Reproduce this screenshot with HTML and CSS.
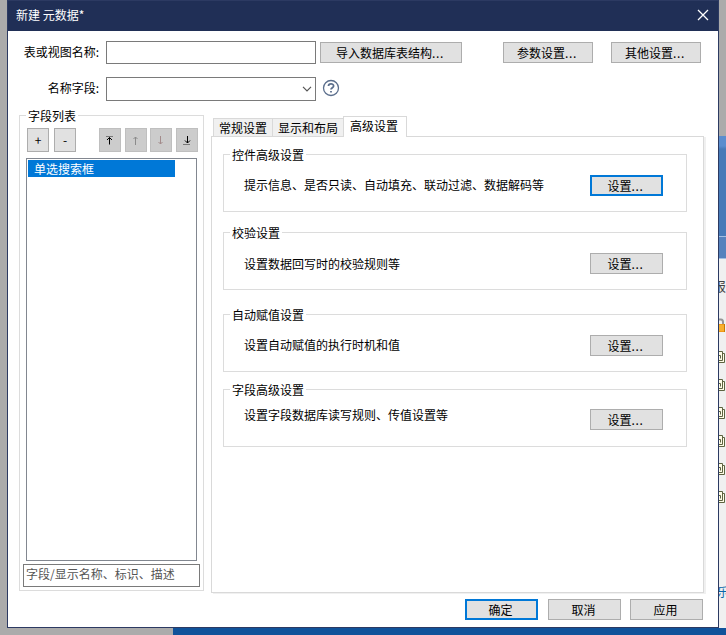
FILE: index.html
```html
<!DOCTYPE html>
<html lang="zh-CN">
<head>
<meta charset="utf-8">
<title>新建 元数据</title>
<link rel="stylesheet" href="styles.css">
</head>
<body>
<div class="desktop">
  <div class="left-edge"></div>
  <main class="dialog">
    <header class="titlebar">
      <span>新建 元数据*</span>
      <svg class="close" width="12" height="12" viewBox="0 0 12 12"><path d="M1 1 11 11M11 1 1 11"/></svg>
    </header>
    <div class="form-row first">
      <label>表或视图名称:</label>
      <div class="field"></div>
      <button class="btn import">导入数据库表结构<span class="dots">...</span></button>
      <button class="btn params">参数设置<span class="dots">...</span></button>
      <button class="btn other">其他设置<span class="dots">...</span></button>
    </div>
    <div class="form-row second">
      <label>名称字段:</label>
      <div class="field combo"><svg width="10" height="6" viewBox="0 0 10 6"><path d="M1 .8 5 4.8 9 .8"/></svg></div>
      <svg class="help" width="18" height="18" viewBox="0 0 18 18"><circle cx="9" cy="9" r="7.5"/><path class="hook" d="M6.5 7C6.5 4.2 11.6 4.2 11.6 6.9 11.6 8.7 9 8.6 9 10.6"/><path class="hook" d="M9 12v1.6"/></svg>
    </div>
    <div class="content">
      <section class="group fields">
        <h2 class="legend">字段列表</h2>
        <div class="tools">
          <button class="tool">+</button>
          <button class="tool minus">-</button>
          <button class="tool dim to-top"><svg width="8" height="9" viewBox="0 0 8 9"><path class="soft" d="M0 .5h7"/><path d="M3.500 8.500v-7M1 4l2.500-2.500L6 4"/></svg></button>
          <button class="tool dim up"><svg class="off" width="8" height="12" viewBox="0 0 8 12"><path d="M3.500 11V3M1.500 5l2-2 2 2"/></svg></button>
          <button class="tool dim down"><svg class="off red" width="8" height="12" viewBox="0 0 8 12"><path d="M3.500 2v8M1.500 8l2 2 2-2"/></svg></button>
          <button class="tool dim to-bottom"><svg width="8" height="9" viewBox="0 0 8 9"><path class="soft" d="M0 8.500h7"/><path d="M4.500 0v7M2 4.500 4.500 7 7 4.500"/></svg></button>
        </div>
        <div class="list"><div class="item">单选搜索框</div></div>
        <div class="filter">字段/显示名称、标识、描述</div>
      </section>
      <section class="tabs">
        <nav class="tabbar">
          <span class="tab one">常规设置</span><span class="tab two">显示和布局</span><span class="tab active">高级设置</span>
        </nav>
        <div class="panel">
          <section class="group setting">
            <h2 class="legend">控件高级设置</h2>
            <div class="line"><p>提示信息、是否只读、自动填充、联动过滤、数据解码等</p><button class="btn small focus">设置<span class="dots">...</span></button></div>
          </section>
          <section class="group setting check">
            <h2 class="legend">校验设置</h2>
            <div class="line"><p>设置数据回写时的校验规则等</p><button class="btn small">设置<span class="dots">...</span></button></div>
          </section>
          <section class="group setting assign">
            <h2 class="legend">自动赋值设置</h2>
            <div class="line"><p>设置自动赋值的执行时机和值</p><button class="btn small">设置<span class="dots">...</span></button></div>
          </section>
          <section class="group setting advanced">
            <h2 class="legend">字段高级设置</h2>
            <div class="line"><p>设置字段数据库读写规则、传值设置等</p><button class="btn small">设置<span class="dots">...</span></button></div>
          </section>
        </div>
      </section>
    </div>
    <footer class="actions">
      <button class="btn small focus">确定</button>
      <button class="btn small">取消</button>
      <button class="btn small">应用</button>
    </footer>
  </main>
  <aside class="right-edge">
    <div class="sky"></div>
    <div class="band"></div>
    <div class="report"><span>报</span></div>
    <svg class="lock" width="7" height="15" viewBox="0 0 7 15"><path d="M0 1.500h2Q4 1.500 4 4V7" fill="none" stroke="#969696" stroke-width="2"/><path d="M0 6h6v8H0z" fill="#f09a16"/><path d="M0 8h5M0 10h5M0 12h5" stroke="#ffc647"/><path d="M5.500 6v8" stroke="#c87508"/></svg>
    <svg class="copies" width="7" height="153" viewBox="0 0 7 153">
      <defs><g id="copy" fill="#fffde8" stroke="#5d6340"><path d="M0 2.500h5.500v9H0"/><path d="M-1 .5h4.500v9H-1"/><path d="M0 4.500h1.500v3" fill="none"/></g></defs>
      <use href="#copy"/><use href="#copy" y="28"/><use href="#copy" y="56"/><use href="#copy" y="84"/><use href="#copy" y="112"/><use href="#copy" y="140"/>
    </svg>
    <div class="link"><span>乐</span></div>
  </aside>
  <div class="bottom-gray"></div>
</div>
</body>
</html>
```

FILE: styles.css
```css
* { box-sizing: border-box; }
body {
  margin: 0;
  font: 12px/14px "Noto Sans CJK SC", sans-serif;
  color: #000;
  overflow: hidden;
}
button, h2, p { margin: 0; font: inherit; color: inherit; }
svg { display: block; fill: none; flex: none; }
.desktop {
  width: 726px;
  height: 635px;
  display: grid;
  grid-template-columns: 7px 712px 7px;
  grid-template-rows: 628px 7px;
  background: #10529a;
}
.left-edge { background: #ababab; }
.bottom-gray { grid-column: 1 / 3; width: 173px; background: #ababab; }
.dialog {
  background: #fff;
  border: 1px solid #2c3a62;
  display: flex;
  flex-direction: column;
}
.titlebar {
  height: 30px;
  background: #202f56;
  color: #fff;
  display: flex;
  align-items: center;
  justify-content: space-between;
  padding: 0 9px 2px 8px;
}
.close { stroke: #fff; stroke-width: 1.3; }
.form-row { display: flex; align-items: center; }
.form-row label { width: 91px; margin-right: 7px; padding-bottom: 2px; text-align: right; white-space: nowrap; }
.first { height: 23px; margin-top: 10px; }
.second { height: 24px; margin-top: 13px; }
.field { width: 210px; height: 100%; border: 1px solid #7a7a7a; }
.combo { display: flex; align-items: center; justify-content: flex-end; padding-right: 3px; }
.combo svg { stroke: #555; stroke-width: 1.2; }
.help { margin: -2px 0 0 6px; stroke: #5b6e8c; stroke-width: 1.3; }
.help .hook { stroke-width: 1.8; }
.btn {
  height: 21px;
  padding: 0 2px 0 0;
  border: 1px solid #adadad;
  background: #e1e1e1;
  display: flex;
  align-items: center;
  justify-content: center;
  white-space: nowrap;
}
.dots { letter-spacing: .7px; }
.import { width: 142px; margin-left: 4px; }
.params { width: 90px; margin-left: 41px; }
.other { width: 90px; margin-left: 18px; }
.small { width: 73px; }
.focus { border: 2px solid #0078d7; }
.content { display: flex; margin-top: 14px; height: 479px; }
.group { border: 1px solid #dcdcdc; }
.legend {
  width: max-content;
  height: 14px;
  background: #fff;
  margin: -7px 0 0 6px;
  padding: 0 2px;
}
.fields { width: 185px; height: 476px; margin-left: 11px; }
.tools { display: flex; margin: 5px 0 0 7px; }
.tool {
  width: 22px;
  height: 24px;
  padding: 0;
  border: 1px solid #adadad;
  background: #e1e1e1;
  display: flex;
  align-items: center;
  justify-content: center;
}
.tool svg { stroke: #000; stroke-width: 1; }
.tool .soft { stroke: #777; }
.tool .off { stroke: #8b8b8b; }
.tool .red { stroke: #a38b8b; }
.dim { background: #ccc; border-color: #bfbfbf; }
.minus { margin-left: 5px; }
.to-top { margin-left: 23px; }
.up { margin-left: 4px; }
.down { margin-left: 3px; }
.to-bottom { margin-left: 4px; }
.list {
  width: 171px;
  height: 403px;
  margin: 6px 0 0 6px;
  padding: 1px;
  border: 1px solid #828790;
}
.item { width: 147px; height: 17px; line-height: 18px; padding-left: 6px; color: #fff; background: #0078d7; }
.filter {
  width: 177px;
  height: 23px;
  margin: 3px 0 0 3px;
  border: 1px solid #7a7a7a;
  line-height: 18px;
  padding-left: 2px;
  color: #555;
}
.tabs { margin-left: 7px; padding-top: 1px; }
.tabbar { display: flex; align-items: flex-end; height: 21px; padding-left: 2px; }
.tab {
  height: 19px;
  border: 1px solid #d9d9d9;
  background: #f0f0f0;
  line-height: 18px;
  padding-left: 5px;
  white-space: nowrap;
}
.one { width: 59px; border-right: 0; }
.two { width: 71px; border-right: 0; }
.active { width: 64px; height: 21px; background: #fff; border-bottom: 0; padding-left: 6px; z-index: 1; }
.panel {
  width: 493px;
  height: 457px;
  margin-top: -1px;
  padding: 17px 0 0 11px;
  border: 1px solid #d9d9d9;
  box-shadow: 2px 1px 0 #f0f0f0;
}
.setting { width: 464px; height: 58px; }
.check { margin-top: 20px; }
.assign { margin-top: 24px; }
.advanced { margin-top: 17px; }
.line { display: flex; justify-content: space-between; align-items: flex-start; padding: 13px 23px 0 20px; }
.line p { margin-top: 3px; }
.check p { margin-top: 4px; }
.advanced .line { padding-top: 12px; }
.advanced p { margin-top: -1px; }
.actions { display: flex; margin: 5px 0 0 457px; }
.actions .btn + .btn { margin-left: 10px; }
.actions .btn:last-child { margin-left: 9px; }
.right-edge { background: #f0f0f0; border-top: 136px solid #ababab; overflow: hidden; height: 628px; }
.sky { height: 100px; background: linear-gradient(#5b8dce 0, #5b8dce 10px, #477ab8 13px, #477ab8); }
.band { height: 23px; background: #5682bd; border-top: 1px solid #a4bfe2; border-bottom: 1px solid #a4bfe2; }
.report, .link { height: 14px; display: flex; }
.report { margin-top: 20px; color: #444; font-size: 13px; }
.report span { margin-left: -6px; }
.lock { margin-top: 25px; }
.copies { margin-top: 18px; }
.link { margin-top: 81px; color: #0865a8; }
.link span { margin-left: -2px; }
```
